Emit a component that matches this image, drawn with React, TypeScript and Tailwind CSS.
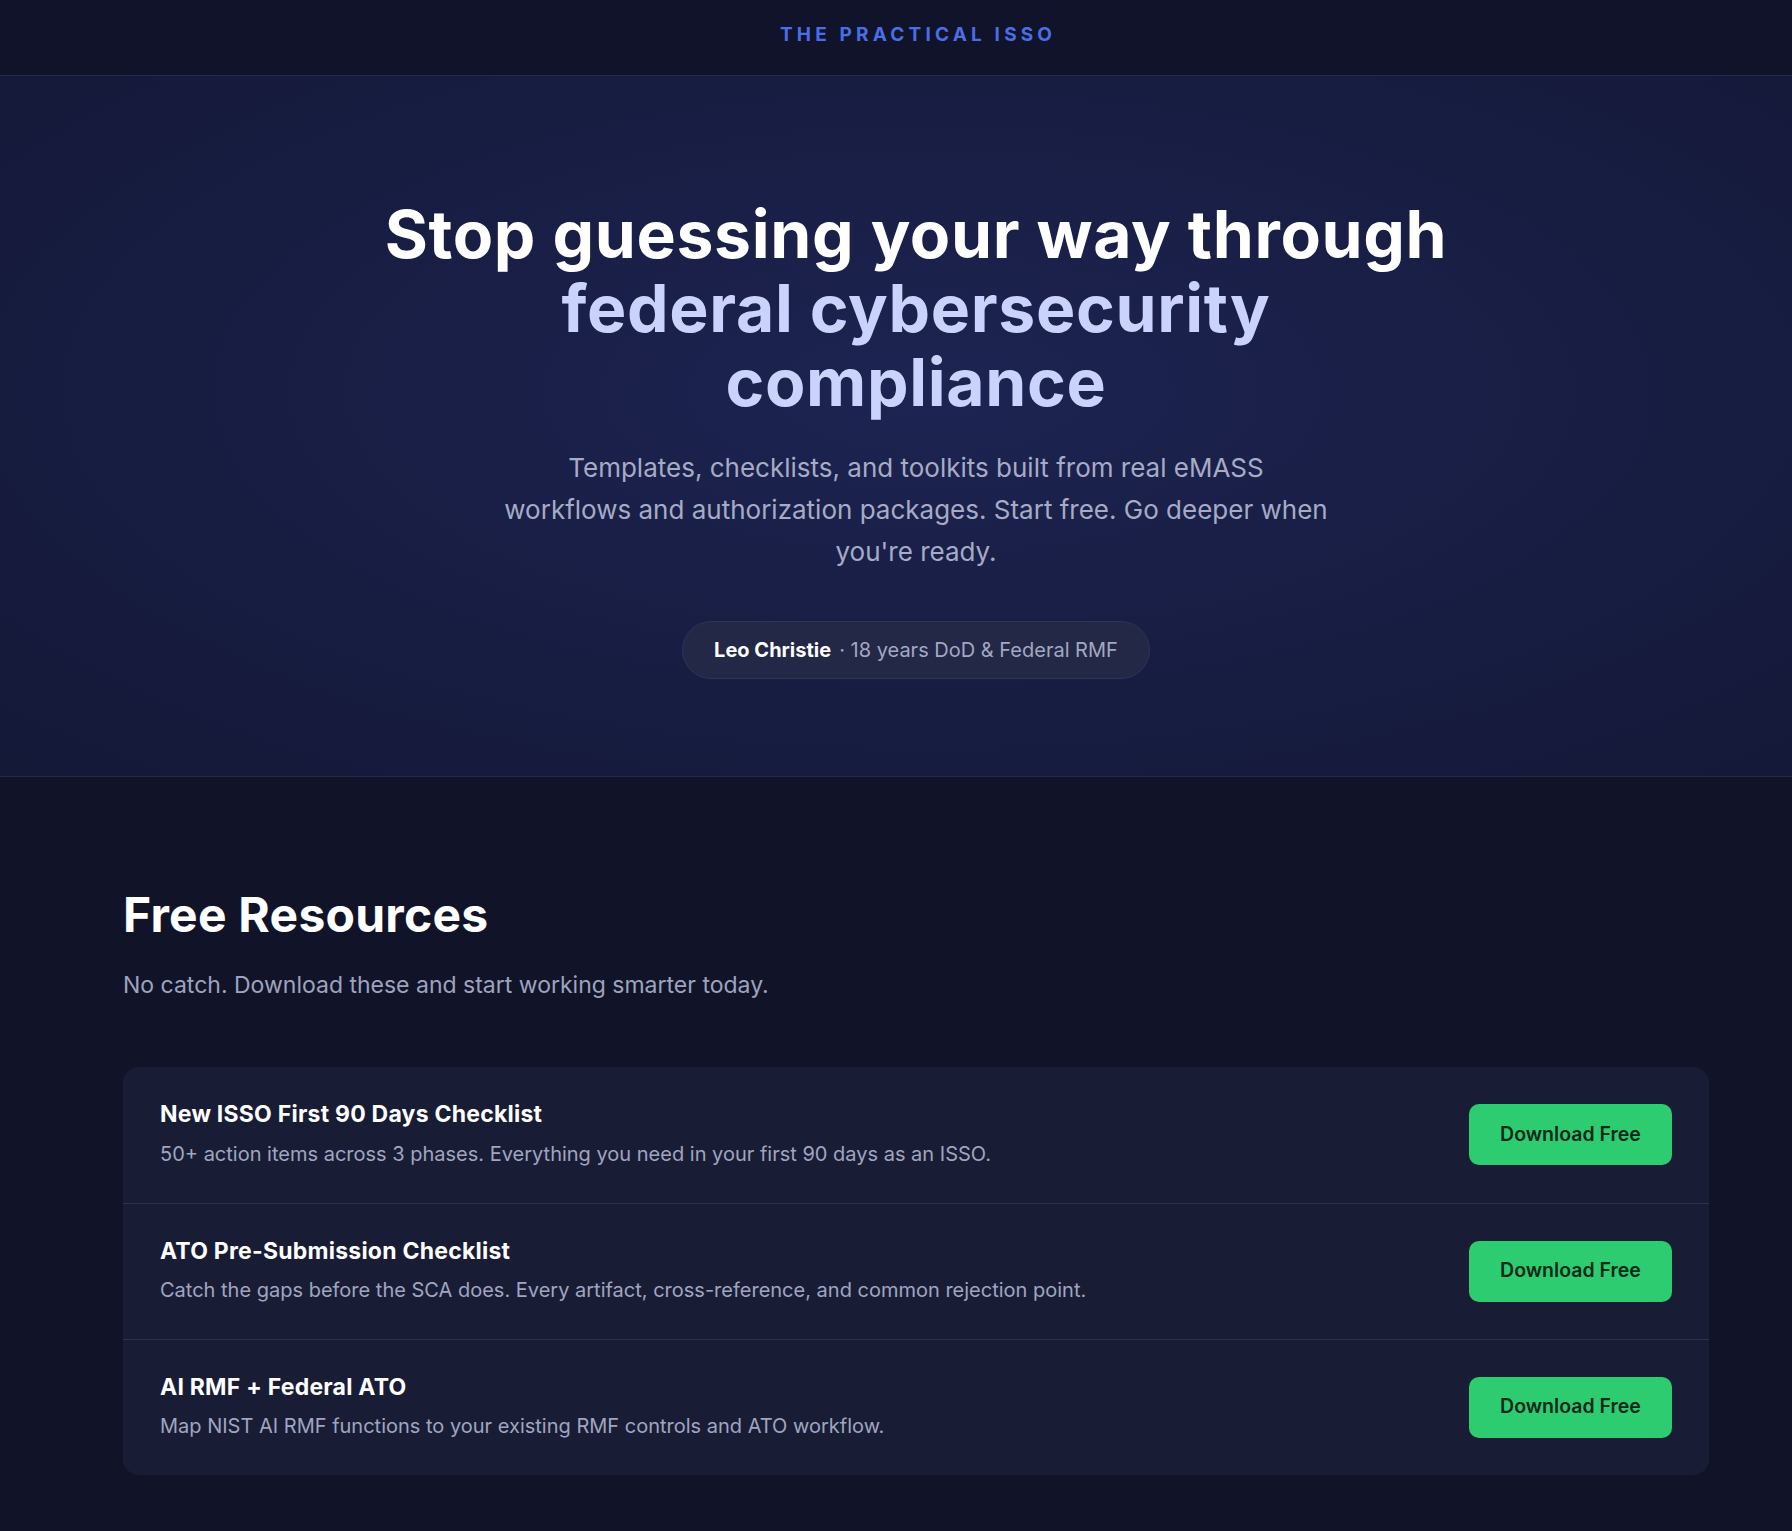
const resources = [
  {
    title: 'New ISSO First 90 Days Checklist',
    desc: '50+ action items across 3 phases. Everything you need in your first 90 days as an ISSO.',
  },
  {
    title: 'ATO Pre-Submission Checklist',
    desc: 'Catch the gaps before the SCA does. Every artifact, cross-reference, and common rejection point.',
  },
  {
    title: 'AI RMF + Federal ATO',
    desc: 'Map NIST AI RMF functions to your existing RMF controls and ATO workflow.',
  },
];

export default function App() {
  return (
    <div className="min-h-screen bg-[#111428] font-['Inter',sans-serif] text-white">
      {/* Top bar */}
      <header className="h-[76px] flex items-center justify-center pl-[40px] pb-[5px] border-b border-[#262b48] bg-[#10132a]">
        <span className="text-[19px] font-bold tracking-[0.22em] text-[#4a6ee8] pl-[0.22em]">
          THE PRACTICAL ISSO
        </span>
      </header>

      {/* Hero */}
      <section className="relative overflow-hidden border-b border-[#232845] bg-[radial-gradient(ellipse_at_52%_45%,#1d2452_0%,#181e44_45%,#141938_100%)]">
        <div className="flex flex-col items-center pl-[64px] pr-6 pt-[121px] pb-[97px] text-center">
          <h1 className="text-[66px] font-bold leading-[74px] tracking-[0.01em]">
            <span className="block">Stop guessing your way through</span>
            <span className="block text-[#c9d3fb]">federal cybersecurity</span>
            <span className="block text-[#c9d3fb]">compliance</span>
          </h1>
          <p className="mt-[28px] text-[26px] leading-[42px] text-[#a6abc6]">
            <span className="block">Templates, checklists, and toolkits built from real eMASS</span>
            <span className="block">workflows and authorization packages. Start free. Go deeper when</span>
            <span className="block">you're ready.</span>
          </p>
          <div className="mt-[48px] flex h-[58px] items-center gap-2 rounded-full border border-[#2e3455] bg-[#222846] px-[31px] text-[20px]">
            <span className="font-bold text-white">Leo Christie</span>
            <span className="text-[#a3a8c2]">· 18 years DoD &amp; Federal RMF</span>
          </div>
        </div>
      </section>

      {/* Free resources */}
      <section className="pl-[123px] pt-[114px] pb-[58px]">
        <h2 className="text-[48px] font-bold leading-none tracking-[0.005em]">Free Resources</h2>
        <p className="mt-[29px] text-[23px] text-[#9ea3bf]">
          No catch. Download these and start working smarter today.
        </p>

        <div className="mt-[64px] w-[1586px] overflow-hidden rounded-2xl bg-[#181d35]">
          {resources.map((r, i) => (
            <div
              key={r.title}
              className={`flex h-[136px] items-center justify-between px-[37px] ${i > 0 ? 'border-t border-[#2a3050]' : ''}`}
            >
              <div>
                <h3 className="text-[23px] font-bold leading-tight tracking-[0.01em] text-white">{r.title}</h3>
                <p className="mt-[10px] text-[20px] text-[#a0a5c0]">{r.desc}</p>
              </div>
              <button className="h-[61px] w-[203px] shrink-0 rounded-[10px] bg-[#2ecc71] text-[19.5px] font-semibold text-[#0f2818]">
                Download Free
              </button>
            </div>
          ))}
        </div>
      </section>
    </div>
  );
}
